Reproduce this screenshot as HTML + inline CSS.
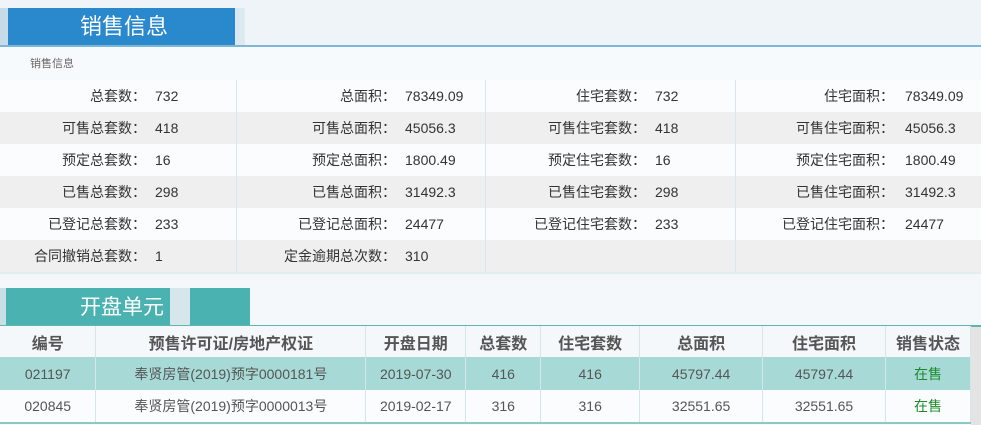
<!DOCTYPE html>
<html><head><meta charset="utf-8"><style>
*{margin:0;padding:0;box-sizing:border-box}
body{width:981px;height:425px;overflow:hidden;background:linear-gradient(180deg,#eef4f8,#f6f9fb);font-family:"Liberation Sans","Noto Sans CJK SC",sans-serif;position:relative;color:#333}
.abs{position:absolute}
.cell{position:absolute;font-size:14px;line-height:32px;white-space:nowrap}
.lab{text-align:right}
table{border-collapse:collapse;position:absolute;left:0;top:326px;width:971px;font-size:14px}
td,th{border-right:1px solid #d5e6ea;text-align:center;white-space:nowrap}
th{height:31px;font-size:16px;color:#555;font-weight:bold;background:#f4f8fa}
td{height:33px;color:#555}
</style></head><body>
<div class="abs" style="left:0;top:8px;width:245px;height:38px;background:linear-gradient(90deg,#c6dbe8,#dde9f1);"></div>
<div class="abs" style="left:8px;top:8px;width:227px;height:38px;background:#2a88cc;color:#fff;font-size:22px;line-height:38px;padding-left:72px">销售信息</div>
<div class="abs" style="left:0;top:45px;width:981px;height:2px;background:#7fb6d6"></div>
<div class="abs" style="left:0;top:47px;width:981px;height:33px;background:#f7fafc;font-size:11px;color:#666;line-height:35px;padding-left:30px">销售信息</div>
<div class="abs" style="left:0;top:80px;width:981px;height:192px;background:#fbfcfd"></div>
<div class="abs" style="left:0;top:112px;width:981px;height:32px;background:#efefef"></div>
<div class="abs" style="left:0;top:176px;width:981px;height:32px;background:#efefef"></div>
<div class="abs" style="left:0;top:240px;width:981px;height:32px;background:#efefef"></div>
<div class="abs" style="left:236px;top:80px;width:1px;height:192px;background:#d8e6ee"></div>
<div class="abs" style="left:485px;top:80px;width:1px;height:192px;background:#d8e6ee"></div>
<div class="abs" style="left:735px;top:80px;width:1px;height:192px;background:#d8e6ee"></div>
<div class="abs" style="left:0;top:272px;width:981px;height:2px;background:#e2edf2"></div>

<div class="cell lab" style="left:0;width:146px;top:80px">总套数：</div><div class="cell" style="left:155px;top:80px">732</div>
<div class="cell lab" style="left:0;width:146px;top:112px">可售总套数：</div><div class="cell" style="left:155px;top:112px">418</div>
<div class="cell lab" style="left:0;width:146px;top:144px">预定总套数：</div><div class="cell" style="left:155px;top:144px">16</div>
<div class="cell lab" style="left:0;width:146px;top:176px">已售总套数：</div><div class="cell" style="left:155px;top:176px">298</div>
<div class="cell lab" style="left:0;width:146px;top:208px">已登记总套数：</div><div class="cell" style="left:155px;top:208px">233</div>
<div class="cell lab" style="left:0;width:146px;top:240px">合同撤销总套数：</div><div class="cell" style="left:155px;top:240px">1</div>

<div class="cell lab" style="left:236px;width:160px;top:80px">总面积：</div><div class="cell" style="left:405px;top:80px">78349.09</div>
<div class="cell lab" style="left:236px;width:160px;top:112px">可售总面积：</div><div class="cell" style="left:405px;top:112px">45056.3</div>
<div class="cell lab" style="left:236px;width:160px;top:144px">预定总面积：</div><div class="cell" style="left:405px;top:144px">1800.49</div>
<div class="cell lab" style="left:236px;width:160px;top:176px">已售总面积：</div><div class="cell" style="left:405px;top:176px">31492.3</div>
<div class="cell lab" style="left:236px;width:160px;top:208px">已登记总面积：</div><div class="cell" style="left:405px;top:208px">24477</div>
<div class="cell lab" style="left:236px;width:160px;top:240px">定金逾期总次数：</div><div class="cell" style="left:405px;top:240px">310</div>

<div class="cell lab" style="left:485px;width:161px;top:80px">住宅套数：</div><div class="cell" style="left:655px;top:80px">732</div>
<div class="cell lab" style="left:485px;width:161px;top:112px">可售住宅套数：</div><div class="cell" style="left:655px;top:112px">418</div>
<div class="cell lab" style="left:485px;width:161px;top:144px">预定住宅套数：</div><div class="cell" style="left:655px;top:144px">16</div>
<div class="cell lab" style="left:485px;width:161px;top:176px">已售住宅套数：</div><div class="cell" style="left:655px;top:176px">298</div>
<div class="cell lab" style="left:485px;width:161px;top:208px">已登记住宅套数：</div><div class="cell" style="left:655px;top:208px">233</div>

<div class="cell lab" style="left:735px;width:159px;top:80px">住宅面积：</div><div class="cell" style="left:905px;top:80px">78349.09</div>
<div class="cell lab" style="left:735px;width:159px;top:112px">可售住宅面积：</div><div class="cell" style="left:905px;top:112px">45056.3</div>
<div class="cell lab" style="left:735px;width:159px;top:144px">预定住宅面积：</div><div class="cell" style="left:905px;top:144px">1800.49</div>
<div class="cell lab" style="left:735px;width:159px;top:176px">已售住宅面积：</div><div class="cell" style="left:905px;top:176px">31492.3</div>
<div class="cell lab" style="left:735px;width:159px;top:208px">已登记住宅面积：</div><div class="cell" style="left:905px;top:208px">24477</div>

<div class="abs" style="left:0;top:288px;width:6px;height:38px;background:#c9dfe6"></div>
<div class="abs" style="left:6px;top:288px;width:164px;height:38px;background:#4ab2b0;color:#fff;font-size:21px;line-height:40px;padding-left:74px">开盘单元</div>
<div class="abs" style="left:170px;top:288px;width:20px;height:38px;background:#d6e6ea"></div>
<div class="abs" style="left:190px;top:288px;width:60px;height:38px;background:#4ab2b0"></div>
<div class="abs" style="left:0;top:325px;width:981px;height:2px;background:#5fb5b3"></div>
<div class="abs" style="left:971px;top:327px;width:10px;height:98px;background:#e4e4e4"></div>
<table>
<tr><th style="width:96px">编号</th><th style="width:270px">预售许可证/房地产权证</th><th style="width:100px">开盘日期</th><th style="width:75px">总套数</th><th style="width:99px">住宅套数</th><th style="width:123px">总面积</th><th style="width:123px">住宅面积</th><th style="width:85px">销售状态</th></tr>
<tr style="background:#a7dad7"><td>021197</td><td>奉贤房管(2019)预字0000181号</td><td>2019-07-30</td><td>416</td><td>416</td><td>45797.44</td><td>45797.44</td><td style="color:#1a8a2a">在售</td></tr>
<tr style="background:#fbfcfd;border-bottom:2px solid #8cc9c6"><td>020845</td><td>奉贤房管(2019)预字0000013号</td><td>2019-02-17</td><td>316</td><td>316</td><td>32551.65</td><td>32551.65</td><td style="color:#1a8a2a">在售</td></tr>
</table>
</body></html>
